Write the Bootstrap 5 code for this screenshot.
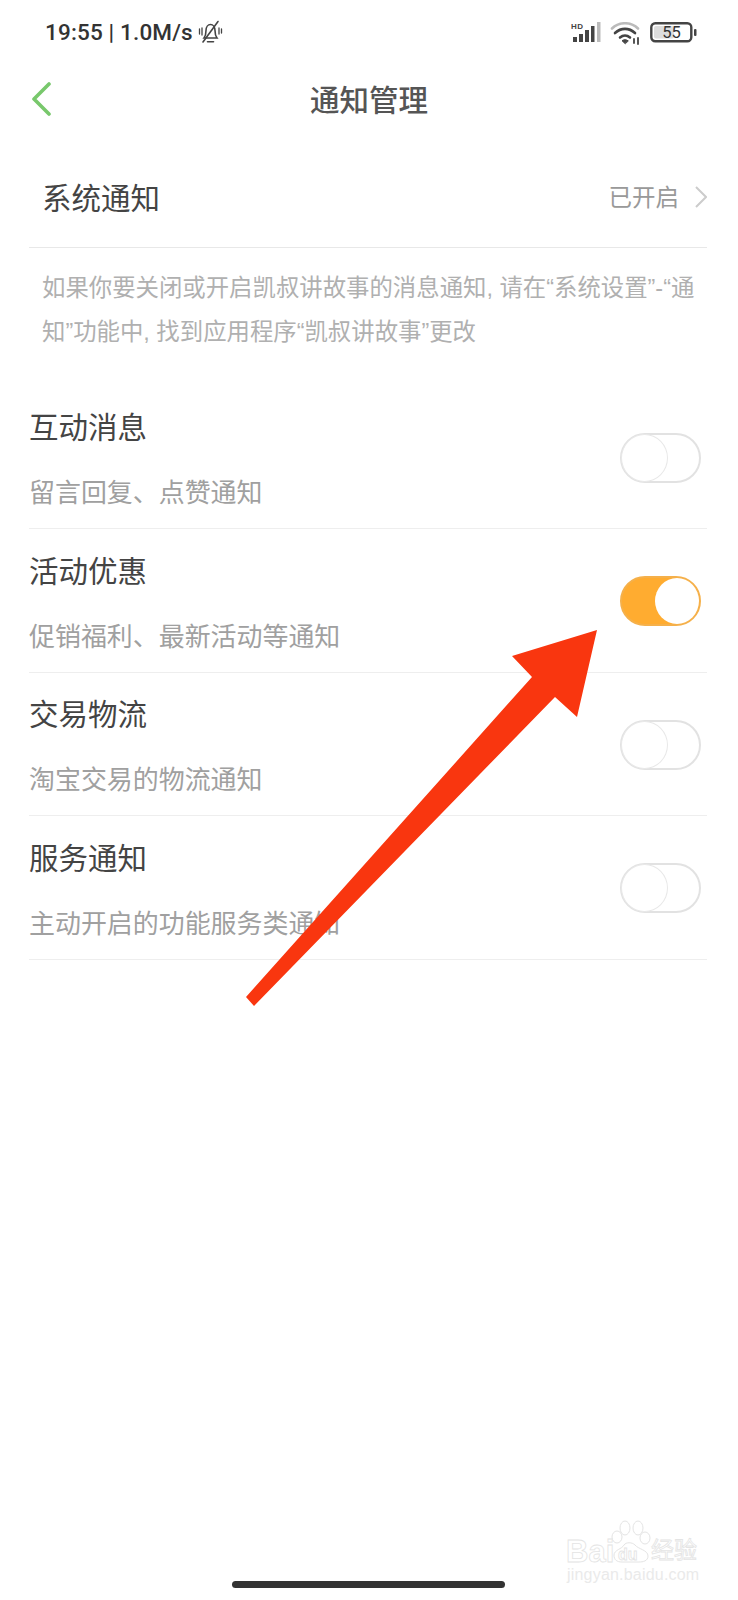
<!DOCTYPE html>
<html lang="zh-CN"><head><meta charset="utf-8"><title>通知管理</title>
<link href="https://cdn.jsdelivr.net/npm/bootstrap@5.3.0/dist/css/bootstrap.min.css" rel="stylesheet">
<style>
html,body{margin:0;background:#fff}
body{font-family:"Noto Sans CJK SC","Liberation Sans",sans-serif;color:#444}
.phone{width:738px;height:1600px;position:relative;overflow:hidden;background:#fff}
.stat-bar{height:64px;padding:19px 41px 0 45px}
.stat-time{font-family:Roboto,sans-serif;font-weight:500;font-size:22.5px;line-height:26px;color:#333;letter-spacing:.15px;white-space:nowrap}
.stat-icons{padding-top:3px}
.ic-sig{overflow:visible}
.ic-wifi{margin-left:9px}
.ic-batt{margin-left:8px}
.ic-bell{margin-left:5px}
.top-head{height:72px;padding:0 31px;position:relative}
.ic-back{margin:18px 0 0 0}
.top-title{font-size:29.5px;line-height:40px;color:#555;position:absolute;left:0;right:0;top:14px;text-align:center;font-weight:500}
.sys-row{height:112px;margin:0 31px 0 29px;padding:8px 0 0 13px;border-bottom:1px solid #e8e8e8}
.big-label{font-size:29.5px;line-height:40px;color:#444}
.state-label{font-size:23.5px;color:#999;line-height:32px}
.ic-chev{margin-top:3px}
.hint-text{font-family:"Liberation Sans","Noto Sans CJK SC",sans-serif;font-size:23.4px;line-height:44px;color:#b0b0b0;padding:18px 25px 0 42px;height:126px;margin:0}
.opt-list{margin:0 31px 0 29px}
.opt-row{height:143.5px;border-bottom:1px solid #eee;padding-top:19.5px}
.opt-row.first{height:155px;padding-top:31px}
.opt-sub{font-size:25.95px;line-height:36px;color:#a0a0a0;margin-top:28px}
.tgl{width:81px;height:50px;border-radius:25px;border:2px solid #e2e2e2;position:relative;flex:none;margin:27.5px 6px 0 0;background:#fff}
.tgl::after{content:"";position:absolute;left:-1px;top:-1px;width:47px;height:48px;border-radius:50%;border:1px solid #e8e8e8;background:#fff}
.tgl.on{background:#ffac30;border-color:#f5b04a}
.tgl.on::after{left:33px;top:0;width:44px;height:46px;border:0}
.home-ind{width:273px;height:7px;border-radius:4px;background:#333;margin:auto 0 12px 232px}
.arrow-over{position:absolute;left:0;top:0;pointer-events:none}
.wm{position:absolute;left:566px;top:1520px;width:134px;height:64px;color:#fff}
.wm-paw{position:absolute;left:44px;top:0}
.wm-a,.wm-b,.wm-c{position:absolute;-webkit-text-stroke:.8px #e4e4e4;white-space:nowrap;line-height:1}
.wm-a{left:0;top:16px;font:700 31px/1 "Liberation Sans",sans-serif}
.wm-b{left:52px;top:27px;font:700 16px/1 "Liberation Sans",sans-serif}
.wm-c{left:85px;top:17px;font-size:23px;font-family:"Noto Sans CJK SC",sans-serif}
.wm-d{position:absolute;left:1px;top:47px;font:16px/1 "Liberation Sans",sans-serif;color:#eaeaea;letter-spacing:.2px;white-space:nowrap}
</style></head><body>
<div class="phone d-flex flex-column">
  <div class="stat-bar d-flex justify-content-between align-items-start">
    <div class="d-flex align-items-center">
      <span class="stat-time">19:55 | 1.0M/s</span>
      <svg class="ic-bell" width="25" height="24" viewBox="0 0 25 24" fill="none" stroke="#444" stroke-width="1.600" stroke-linecap="round"><path d="M6 18c1.500-2 2-4 2-7.500 0-3.500 2-6 4.500-6s4.500 2.500 4.500 6c0 3.500.5 5.500 2 7.500z"/><path d="M9.500 21.800h6"/><path d="M5 22 20 1.500"/><path d="M1.500 9v5M4 8v7M21 8v6M23.500 9v4" stroke-width="1.300"/></svg>
    </div>
    <div class="stat-icons d-flex align-items-start">
      <svg class="ic-sig" width="30" height="22" viewBox="0 0 30 22"><text x="0" y="6.500" font-family="Liberation Sans" font-weight="700" font-size="8" letter-spacing=".5" fill="#444">HD</text><rect x="2" y="15" width="4" height="5" fill="#444"/><rect x="8" y="12" width="4" height="8" fill="#444"/><rect x="14" y="8" width="4" height="12" fill="#444"/><rect x="20" y="4" width="3.500" height="16" fill="#444"/><rect x="26" y="0" width="3.500" height="20" fill="#bbb"/></svg>
      <svg class="ic-wifi" width="32" height="24" viewBox="0 0 32 24" fill="none" stroke="#444" stroke-width="2.600" stroke-linecap="round"><path d="M2 6.500C9-.5 21-.5 28 6.500" stroke="#bbb"/><path d="M5 11c6-5.500 14-5.500 20 0"/><path d="M10 15.500c3-2.500 7-2.500 10 0"/><path d="M15 21.500l-3-2.800c2-1.400 4-1.400 6 0z" fill="#444" stroke-width="1"/><path d="M24 17v4M28 16v6" stroke-width="1.800"/></svg>
      <svg class="ic-batt" width="47" height="21" viewBox="0 0 47 21"><rect x="1.300" y="1.300" width="40" height="18" rx="4" fill="#fff" stroke="#444" stroke-width="2.400"/><rect x="4" y="4" width="20" height="12.500" rx="2" fill="#ddd"/><rect x="44" y="7" width="2.500" height="7" rx="1" fill="#444"/><text x="21.500" y="16.300" text-anchor="middle" font-family="Roboto" font-size="16.500" fill="#333">55</text></svg>
    </div>
  </div>
  <div class="top-head">
    <svg class="ic-back" width="20" height="34" viewBox="0 0 20 34" fill="none" stroke="#78c86c" stroke-width="3.600" stroke-linecap="round" stroke-linejoin="round"><path d="M18 2 3 17l15 15"/></svg>
    <h1 class="top-title m-0">通知管理</h1>
  </div>
  <div class="sys-row d-flex align-items-center justify-content-between">
    <span class="big-label">系统通知</span>
    <div class="d-flex align-items-center gap-3">
      <span class="state-label">已开启</span>
      <svg class="ic-chev" width="12" height="22" viewBox="0 0 12 22" fill="none" stroke="#ccc" stroke-width="2"><path d="M1 1l10 10L1 21"/></svg>
    </div>
  </div>
  <p class="hint-text">如果你要关闭或开启凯叔讲故事的消息通知, 请在“系统设置”-“通知”功能中, 找到应用程序“凯叔讲故事”更改</p>
  <div class="opt-list">
    <div class="opt-row first d-flex justify-content-between align-items-start"><div><div class="big-label">互动消息</div><div class="opt-sub">留言回复、点赞通知</div></div><span class="tgl"></span></div>
    <div class="opt-row d-flex justify-content-between align-items-start"><div><div class="big-label">活动优惠</div><div class="opt-sub">促销福利、最新活动等通知</div></div><span class="tgl on"></span></div>
    <div class="opt-row d-flex justify-content-between align-items-start"><div><div class="big-label">交易物流</div><div class="opt-sub">淘宝交易的物流通知</div></div><span class="tgl"></span></div>
    <div class="opt-row d-flex justify-content-between align-items-start"><div><div class="big-label">服务通知</div><div class="opt-sub">主动开启的功能服务类通知</div></div><span class="tgl"></span></div>
  </div>
  <div class="home-ind"></div>
  <svg class="arrow-over" width="738" height="1100" viewBox="0 0 738 1100"><polygon fill="#f9360f" points="597,630 577,717 555,697 254,1006 246,997 532,677 512,656"/></svg>
  <div class="wm">
    <svg class="wm-paw" width="42" height="44" viewBox="0 0 42 44" fill="#fff" stroke="#e4e4e4" stroke-width="1"><ellipse cx="7" cy="17" rx="5" ry="6"/><ellipse cx="15" cy="8" rx="5" ry="7"/><ellipse cx="28" cy="8" rx="5" ry="7"/><ellipse cx="35" cy="18" rx="5" ry="6"/><path d="M4 35c0-5 8-6 10-10 2-3 8-3 11 0 3 4 13 5 13 11 0 5-5 6-9 6H12c-5 0-8-2-8-7z"/></svg>
    <span class="wm-a">Bai</span><span class="wm-b">du</span><span class="wm-c">经验</span>
    <span class="wm-d">jingyan.baidu.com</span>
  </div>
</div>
</body></html>
